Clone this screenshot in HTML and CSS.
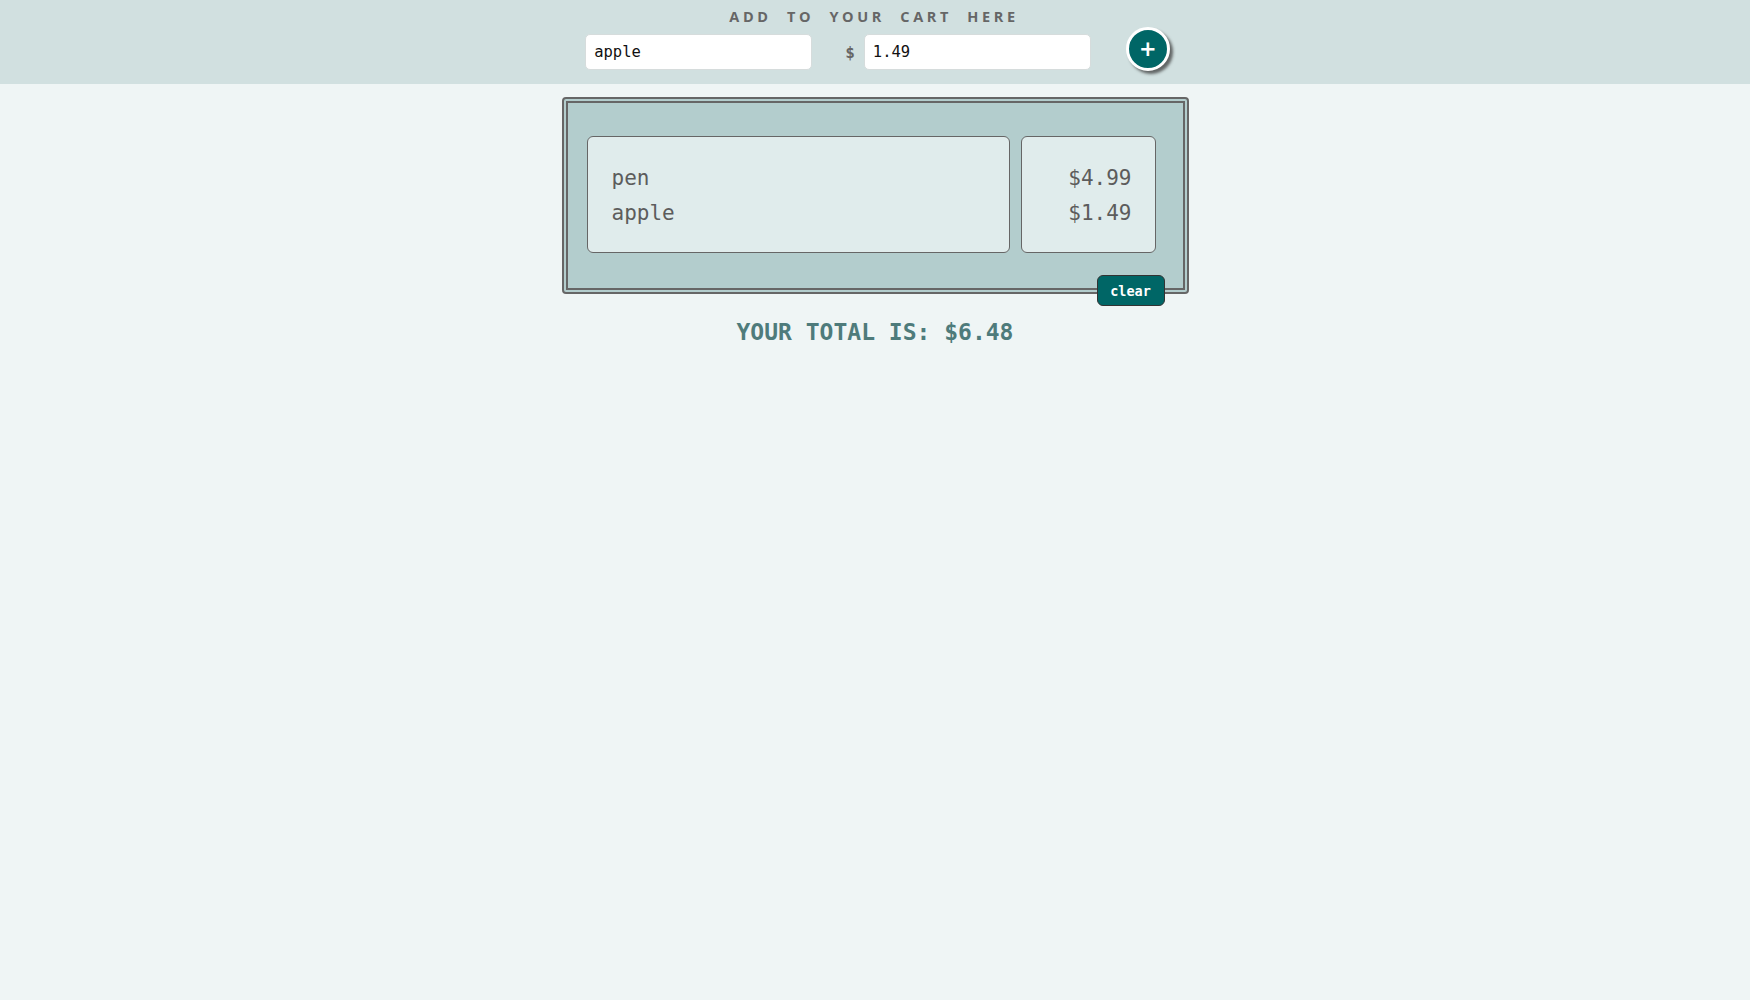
FILE: index.html
```html
<!DOCTYPE html>
<html>
<head>
<meta charset="utf-8">
<link rel="stylesheet" href="styles.css">
</head>
<body>
<header class="top">
  <h1 class="title">ADD TO YOUR CART HERE</h1>
  <div class="form-row">
    <input class="field" type="text" value="apple">
    <span class="dollar">$</span>
    <input class="field" type="text" value="1.49">
    <button class="add-btn">+</button>
  </div>
</header>
<main class="main">
  <section class="cart">
    <div class="panel names">
      <div class="line">pen</div>
      <div class="line">apple</div>
    </div>
    <div class="panel prices">
      <div class="line">$4.99</div>
      <div class="line">$1.49</div>
    </div>
    <button class="clear-btn">clear</button>
  </section>
  <div class="total">YOUR TOTAL IS: $6.48</div>
</main>
</body>
</html>
```
FILE: styles.css
```css
html, body {
  margin: 0;
  padding: 0;
}
body {
  background: #eff5f5;
  font-family: "DejaVu Sans Mono", monospace;
  color: #666;
  min-height: 1000px;
}
.top {
  background: #d1e0e0;
  height: 84px;
  box-sizing: border-box;
  padding-top: 8px;
  display: flex;
  flex-direction: column;
  align-items: center;
}
.title {
  margin: 0;
  font-family: "Open Sans", sans-serif;
  font-weight: 700;
  font-size: 14.5px;
  line-height: 18px;
  letter-spacing: 3.6px;
  word-spacing: 8px;
  color: #666;
  padding-right: 2px;
}
.form-row {
  display: flex;
  align-items: center;
  margin-top: 7px;
  padding-left: 5px;
}
.field {
  width: 227px;
  height: 36px;
  box-sizing: border-box;
  border: 1px solid #d6dcdc;
  border-radius: 5px;
  background: #fff;
  font-family: "DejaVu Sans Mono", monospace;
  font-size: 15.5px;
  color: #111;
  padding: 0 8px;
  outline: none;
}
.dollar {
  margin-left: 33px;
  margin-right: 9px;
  font-family: "DejaVu Sans Mono", monospace;
  font-weight: 700;
  font-size: 16px;
  color: #666;
}
.add-btn {
  margin-left: 35px;
  margin-top: -6px;
  width: 44px;
  height: 44px;
  border-radius: 50%;
  border: 3px solid #fff;
  background: #006666;
  color: #fff;
  font-family: "DejaVu Sans", sans-serif;
  font-weight: 700;
  font-size: 21px;
  line-height: 1;
  padding: 0;
  box-shadow: 3px 3px 3px rgba(60, 60, 60, 0.75);
}
.main {
  display: flex;
  flex-direction: column;
  align-items: center;
  padding-top: 13px;
}
.cart {
  position: relative;
  width: 627px;
  height: 197px;
  box-sizing: border-box;
  border: 6px double #666;
  border-radius: 4px;
  background: #b3cdcd;
  padding: 33px 27px 34px 19px;
  display: flex;
  gap: 11px;
}
.panel {
  box-sizing: border-box;
  height: 117px;
  background: #e0ecec;
  border: 1px solid #666;
  border-radius: 6px;
  display: flex;
  flex-direction: column;
  justify-content: center;
  font-size: 21px;
  line-height: 34.5px;
  color: #5c5c5c;
  padding-top: 2px;
}
.names {
  width: 423px;
  padding-left: 24px;
}
.prices {
  width: 135px;
  align-items: flex-end;
  padding-right: 23px;
}
.clear-btn {
  position: absolute;
  right: 18px;
  bottom: -18px;
  width: 68px;
  height: 31px;
  box-sizing: border-box;
  background: #006666;
  color: #fff;
  border: 1px solid #333;
  border-radius: 6px;
  font-family: "DejaVu Sans Mono", monospace;
  font-weight: 700;
  font-size: 13.5px;
  padding: 0;
}
.total {
  margin-top: 24px;
  font-weight: 700;
  font-size: 23px;
  color: #4e7b7b;
  line-height: 28px;
}
```
